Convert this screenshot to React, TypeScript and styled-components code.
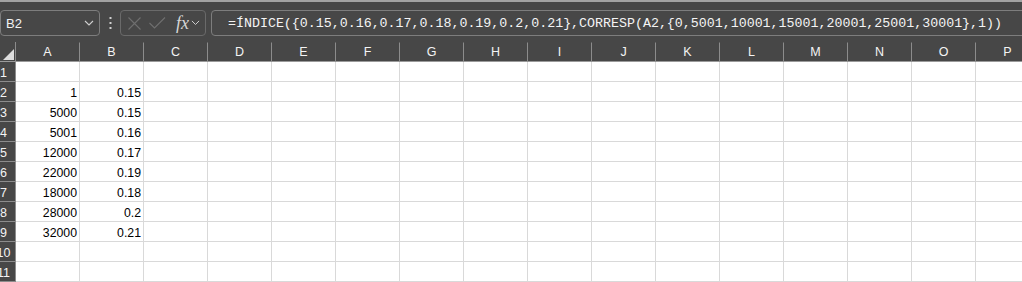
import styled, { createGlobalStyle } from 'styled-components';

const GlobalStyle = createGlobalStyle`
  html, body {
    margin: 0;
    padding: 0;
    background: #ffffff;
    overflow: hidden;
  }
  * {
    box-sizing: border-box;
  }
`;

const COLUMNS = 'ABCDEFGHIJKLMNOP'.split('');
const ROW_COUNT = 11;

const DATA: Record<number, [string, string]> = {
  2: ['1', '0.15'],
  3: ['5000', '0.15'],
  4: ['5001', '0.16'],
  5: ['12000', '0.17'],
  6: ['22000', '0.19'],
  7: ['18000', '0.18'],
  8: ['28000', '0.2'],
  9: ['32000', '0.21'],
};

const FORMULA =
  '=ÍNDICE({0.15,0.16,0.17,0.18,0.19,0.2,0.21},CORRESP(A2,{0,5001,10001,15001,20001,25001,30001},1))';

const Styled = {
  Root: styled.div`
    width: 1022px;
    height: 282px;
    overflow: hidden;
    font-family: 'Liberation Sans', Arial, sans-serif;
  `,
  Toolbar: styled.div`
    height: 42px;
    border-top: 2px solid #a3a3a3;
    background: #474747;
    display: flex;
    align-items: flex-start;
    padding-top: 8px;
  `,
  NameBox: styled.div`
    width: 100px;
    height: 26px;
    border: 1px solid #7d7d7d;
    border-radius: 4px;
    display: flex;
    align-items: center;
    justify-content: space-between;
    padding: 0 5px 0 5px;
    color: #f2f2f2;
    font-size: 13px;
  `,
  Dots: styled.div`
    width: 20px;
    height: 26px;
    display: flex;
    align-items: center;
    justify-content: center;
  `,
  FxGroup: styled.div`
    width: 86px;
    height: 26px;
    border: 1px solid #6a6a6a;
    border-radius: 4px;
    display: flex;
    align-items: center;
    padding-left: 7px;
  `,
  FxLabel: styled.span`
    font-family: 'Liberation Serif', 'Times New Roman', serif;
    font-style: italic;
    font-size: 18px;
    color: #d6d6d6;
    margin-left: 10px;
    margin-right: 2px;
    line-height: 1;
  `,
  FormulaBox: styled.div`
    flex: 1;
    margin-left: 5px;
    margin-right: -12px;
    height: 26px;
    border: 1px solid #7d7d7d;
    border-radius: 4px;
    display: flex;
    align-items: center;
    padding-left: 16px;
    color: #f4f4f4;
    font-family: 'Liberation Mono', 'Courier New', monospace;
    font-size: 13.3px;
    white-space: nowrap;
    overflow: hidden;
  `,
  Grid: styled.div`
    display: grid;
    grid-template-columns: 16px repeat(${COLUMNS.length}, 64px);
    grid-auto-rows: 20px;
  `,
  Corner: styled.div`
    background: #474747;
    border-right: 1px solid #8c8c8c;
    border-bottom: 1px solid #9a9a9a;
    display: flex;
    align-items: flex-end;
    justify-content: flex-end;
    padding: 0 1px 1px 0;
  `,
  ColHeader: styled.div`
    background: #474747;
    border-right: 1px solid #8c8c8c;
    border-bottom: 1px solid #9a9a9a;
    border-top: 1px solid #474747;
    display: flex;
    align-items: center;
    justify-content: center;
    color: #f4f4f4;
    font-size: 12.5px;
  `,
  RowHeader: styled.div`
    background: #474747;
    border-right: 1px solid #8c8c8c;
    border-bottom: 1px solid #8c8c8c;
    display: flex;
    align-items: center;
    justify-content: center;
    padding: 2px 8px 0 0;
    color: #f4f4f4;
    font-size: 12.5px;
    white-space: nowrap;
  `,
  Cell: styled.div`
    border-right: 1px solid #d9d9d9;
    border-bottom: 1px solid #d9d9d9;
    display: flex;
    align-items: center;
    justify-content: flex-end;
    padding: 3px 2px 0 0;
    color: #000000;
    font-size: 12.3px;
    white-space: nowrap;
  `,
};

const Chevron = ({ size = 10, color = '#cfcfcf' }: { size?: number; color?: string }) => (
  <svg width={size} height={size * 0.6} viewBox="0 0 10 6" fill="none">
    <path d="M1 1 L5 5 L9 1" stroke={color} strokeWidth="1.1" />
  </svg>
);

const App = () => {
  const rows = Array.from({ length: ROW_COUNT }, (_, i) => i + 1);

  return (
    <Styled.Root>
      <GlobalStyle />
      <Styled.Toolbar>
        <Styled.NameBox>
          <span>B2</span>
          <Chevron />
        </Styled.NameBox>
        <Styled.Dots>
          <svg width="3" height="12" viewBox="0 0 3 12">
            <rect x="0.5" y="0" width="2" height="2" fill="#d0d0d0" />
            <rect x="0.5" y="5" width="2" height="2" fill="#d0d0d0" />
            <rect x="0.5" y="10" width="2" height="2" fill="#d0d0d0" />
          </svg>
        </Styled.Dots>
        <Styled.FxGroup>
          <svg width="13" height="13" viewBox="0 0 13 13">
            <path d="M0.5 0.5 L12.5 12.5 M12.5 0.5 L0.5 12.5" stroke="#6f6f6f" strokeWidth="1.1" />
          </svg>
          <svg width="17" height="12" viewBox="0 0 17 12" style={{ marginLeft: 8 }}>
            <path d="M0.5 6 L5.5 11 L16 0.5" stroke="#6f6f6f" strokeWidth="1.1" fill="none" />
          </svg>
          <Styled.FxLabel>fx</Styled.FxLabel>
          <Chevron size={9} />
        </Styled.FxGroup>
        <Styled.FormulaBox>{FORMULA}</Styled.FormulaBox>
      </Styled.Toolbar>
      <Styled.Grid>
        <Styled.Corner>
          <svg width="11" height="11" viewBox="0 0 11 11">
            <polygon points="11,0 11,11 0,11" fill="#dedede" />
          </svg>
        </Styled.Corner>
        {COLUMNS.map((c) => (
          <Styled.ColHeader key={c}>{c}</Styled.ColHeader>
        ))}
        {rows.map((r) => (
          <Row key={r} index={r} />
        ))}
      </Styled.Grid>
    </Styled.Root>
  );
};

const Row = ({ index }: { index: number }) => {
  const values = DATA[index];
  return (
    <>
      <Styled.RowHeader>{index}</Styled.RowHeader>
      {COLUMNS.map((c, ci) => (
        <Styled.Cell key={c}>{values && ci < 2 ? values[ci] : ''}</Styled.Cell>
      ))}
    </>
  );
};

export default App;
